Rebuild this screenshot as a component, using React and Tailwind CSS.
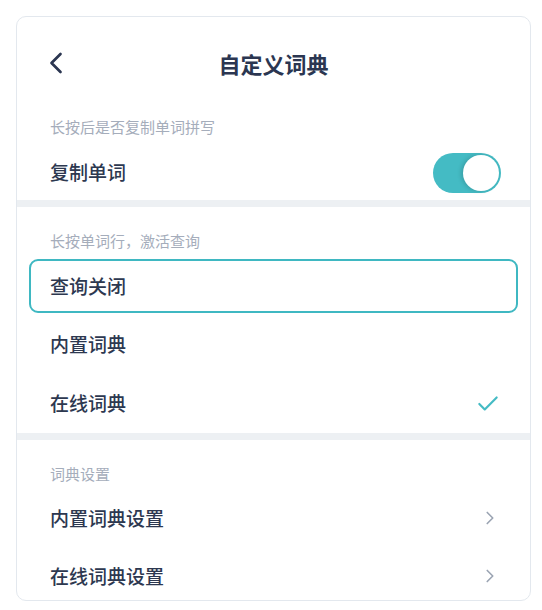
import { Check, ChevronLeft, ChevronRight } from "lucide-react";

const font = { fontFamily: '"Noto Sans CJK SC", "Noto Sans", sans-serif' };

function SectionLabel({ children, className = "" }) {
  return (
    <div className={`px-[33px] text-[15px] leading-[20px] text-[#a5adbb] ${className}`}>
      {children}
    </div>
  );
}

function Row({ label, right, className = "" }) {
  return (
    <div className={`flex shrink-0 items-center justify-between pl-[33px] pr-[29px] ${className}`}>
      <span className="text-[19px] font-medium text-[#2d3850]">{label}</span>
      {right}
    </div>
  );
}

function Toggle() {
  return (
    <div className="flex h-[40px] w-[68px] items-center justify-end rounded-full bg-[#44bbc4] p-[2px]">
      <div className="h-[36px] w-[36px] rounded-full bg-white shadow-[-2px_0_4px_rgba(0,0,0,0.15)]" />
    </div>
  );
}

export default function App() {
  return (
    <div className="min-h-screen bg-white p-4" style={font}>
      <div className="flex h-[585px] w-[515px] flex-col overflow-hidden rounded-[10px] border border-[#e3e8ee] bg-white">
        {/* header */}
        <div className="relative flex h-[92px] shrink-0 items-center justify-center">
          <ChevronLeft
            className="absolute left-[21px] top-[28px] text-[#2b3651]"
            size={36}
            strokeWidth={1.8}
          />
          <h1 className="text-[22px] font-bold text-[#2b3651]">自定义词典</h1>
        </div>

        <SectionLabel className="pt-[8px] pb-[8px]">长按后是否复制单词拼写</SectionLabel>
        <Row label="复制单词" right={<Toggle />} className="h-[55px]" />

        <div className="h-[7px] shrink-0 bg-[#edf0f3]" />

        <SectionLabel className="pt-[24px]">长按单词行，激活查询</SectionLabel>
        <div className="mx-[12px] mt-[8px] flex h-[54px] shrink-0 items-center rounded-[9px] border-2 border-[#3fb8c2] pl-[19px]">
          <span className="text-[19px] font-medium text-[#2d3850]">查询关闭</span>
        </div>
        <Row label="内置词典" className="mt-[2px] h-[59px]" />
        <Row
          label="在线词典"
          className="h-[59px]"
          right={<Check size={26} strokeWidth={2} className="text-[#44bbc4]" />}
        />

        <div className="h-[7px] shrink-0 bg-[#edf0f3]" />

        <SectionLabel className="pt-[24px]">词典设置</SectionLabel>
        <Row
          label="内置词典设置"
          className="mt-[5px] h-[58px]"
          right={<ChevronRight size={22} strokeWidth={1.8} className="text-[#9ba4b3]" />}
        />
        <Row
          label="在线词典设置"
          className="h-[58px]"
          right={<ChevronRight size={22} strokeWidth={1.8} className="text-[#9ba4b3]" />}
        />
      </div>
    </div>
  );
}
